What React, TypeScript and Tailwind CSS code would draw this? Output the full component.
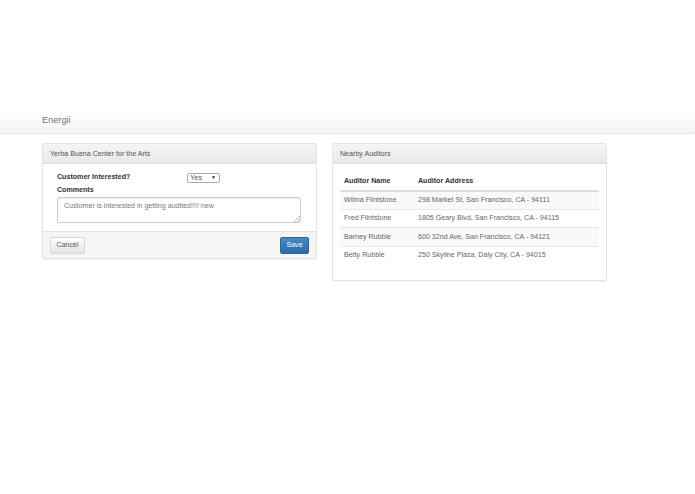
const auditors = [
  { name: 'Wilma Flintstone', address: '298 Market St, San Francisco, CA - 94111' },
  { name: 'Fred Flintstone', address: '1805 Geary Blvd, San Francisco, CA - 94115' },
  { name: 'Barney Rubble', address: '600 32nd Ave, San Francisco, CA - 94121' },
  { name: 'Betty Rubble', address: '250 Skyline Plaza, Daly City, CA - 94015' },
];

const App = () => {
  return (
    <div className="h-[494px] w-[695px] overflow-hidden bg-white pt-[110px] font-['Liberation_Sans',Arial,sans-serif] text-[7.1px] text-[#666]">
      {/* Navbar */}
      <div className="flex h-[24px] items-center border-b border-[#e7e7e7] bg-gradient-to-b from-white to-[#f4f4f4] pb-[2px] pl-[42px]">
        <span className="text-[9.2px] text-[#777]">Energii</span>
      </div>

      <div className="flex items-start gap-[15px] pl-[42px] pt-[9px]">
        {/* Visit form */}
        <div className="w-[275px] rounded-[2px] border border-[#e4e4e4] shadow-[0_1px_1px_rgba(0,0,0,0.05)]">
          <div className="flex h-[20px] items-center border-b border-[#ddd] bg-gradient-to-b from-[#f5f5f5] to-[#e9e9e9] pl-[7px] pt-[1px] text-[#555]">
            Yerba Buena Center for the Arts
          </div>
          <div className="h-[67px] px-[14px] pt-[8px]">
            <div className="flex h-[11px] items-center">
              <span className="w-[130px] font-bold text-[#333]">Customer Interested?</span>
              <div className="flex h-[10px] w-[33px] items-center justify-between rounded-[2px] border border-[#aaa] pl-[2px] pr-[3px] text-[7.6px] text-[#555]">
                <span>Yes</span>
                <span className="text-[5px] text-[#222]">▼</span>
              </div>
            </div>
            <div className="mt-[1px] h-[12px] font-bold leading-[12px] text-[#333]">Comments</div>
            <div className="relative mt-[1px] h-[26px] w-[244px] rounded-[2px] border border-[#ccc] px-[6px] pt-[3px] text-[#777] shadow-[inset_0_1px_1px_rgba(0,0,0,0.075)]">
              Customer is interested in getting audited!!!! new
              <svg className="absolute bottom-0 right-0" width="6" height="6" viewBox="0 0 6 6">
                <path d="M0 6 L6 0 M3 6 L6 3" stroke="#999" strokeWidth="0.7" />
              </svg>
            </div>
          </div>
          <div className="flex h-[27px] items-center justify-between border-t border-[#e4e4e4] bg-[#f5f5f5] px-[7px]">
            <button className="h-[17px] w-[35px] rounded-[2px] border border-[#d8d8d8] bg-gradient-to-b from-white to-[#e4e4e4] text-[7.1px] text-[#555]">
              Cancel
            </button>
            <button className="h-[17px] w-[29px] rounded-[2px] border border-[#2b669a] bg-gradient-to-b from-[#428bca] to-[#2d6ca2] text-[7.1px] text-white">
              Save
            </button>
          </div>
        </div>

        {/* Nearby auditors */}
        <div className="h-[138px] w-[275px] rounded-[2px] border border-[#e4e4e4] shadow-[0_1px_1px_rgba(0,0,0,0.05)]">
          <div className="flex h-[20px] items-center border-b border-[#ddd] bg-gradient-to-b from-[#f5f5f5] to-[#e9e9e9] pl-[7px] pt-[1px] text-[#555]">
            Nearby Auditors
          </div>
          <div className="px-[7px] pt-[9px]">
            <table className="w-[259px] border-collapse text-left">
              <thead>
                <tr className="h-[18px] border-b-2 border-[#ddd]">
                  <th className="w-[74px] pl-[4px] font-bold text-[#333]">Auditor Name</th>
                  <th className="pl-[4px] font-bold text-[#333]">Auditor Address</th>
                </tr>
              </thead>
              <tbody>
                {auditors.map((a, i) => (
                  <tr
                    key={a.name}
                    className={`h-[18.4px] ${i < 3 ? 'border-b border-[#e8e8e8]' : ''} ${i % 2 === 0 && i < 3 ? 'bg-[#f9f9f9]' : ''}`}
                  >
                    <td className="pl-[4px]">{a.name}</td>
                    <td className="pl-[4px]">{a.address}</td>
                  </tr>
                ))}
              </tbody>
            </table>
          </div>
        </div>
      </div>
    </div>
  );
};

export default App;
